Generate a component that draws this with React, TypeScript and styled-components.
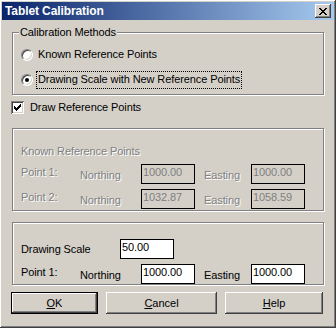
import styled, { createGlobalStyle } from "styled-components";

const GlobalStyle = createGlobalStyle`
  html, body {
    margin: 0;
    padding: 0;
    background: #d4d0c8;
  }
  * {
    box-sizing: border-box;
  }
`;

const raised = `
  background: #d4d0c8;
  box-shadow: inset -1px -1px 0 #404040, inset 1px 1px 0 #ffffff,
    inset -2px -2px 0 #808080, inset 2px 2px 0 #d4d0c8;
`;

const Window = styled.div`
  width: 336px;
  height: 328px;
  padding: 2px;
  background: #d4d0c8;
  box-shadow: inset -1px -1px 0 #404040, inset 1px 1px 0 #ffffff,
    inset -2px -2px 0 #808080;
  font-family: "Liberation Sans", Arial, sans-serif;
  font-size: 11px;
  line-height: 13px;
  letter-spacing: -0.1px;
  color: #000;
  display: flex;
  flex-direction: column;
`;

const TitleBar = styled.div`
  height: 18px;
  display: flex;
  align-items: center;
  justify-content: space-between;
  padding: 0 3px;
  background: linear-gradient(to right, #0a246a, #a6caf0);
`;

const Title = styled.span`
  color: #fff;
  font-weight: bold;
  font-size: 12px;
`;

const CloseButton = styled.div`
  width: 16px;
  height: 14px;
  display: grid;
  place-items: center;
  ${raised}
`;

const Body = styled.div`
  display: flex;
  flex-direction: column;
  padding: 0 10px;
`;

const GroupBox = styled.div<{ $top: number; $pad: string }>`
  position: relative;
  margin-top: ${(p) => p.$top}px;
  padding: ${(p) => p.$pad};
  border: 1px solid #808080;
  box-shadow: inset 1px 1px 0 #ffffff, 1px 1px 0 #ffffff;
  display: flex;
  flex-direction: column;
`;

const Legend = styled.span`
  position: absolute;
  top: -7px;
  left: 6px;
  padding: 0 1px;
  background: #d4d0c8;
`;

const RadioList = styled.div`
  display: flex;
  flex-direction: column;
  gap: 9px;
`;

const RadioRow = styled.div`
  height: 16px;
  display: flex;
  align-items: center;
  gap: 4px;
`;

const Radio = styled.span<{ $checked?: boolean }>`
  position: relative;
  width: 12px;
  height: 12px;
  border-radius: 50%;
  background: #fff;
  border: 1px solid;
  border-color: #808080 #ffffff #ffffff #808080;
  box-shadow: inset 1px 1px 0 #404040, inset -1px -1px 0 #d4d0c8;
  &::after {
    content: "";
    display: ${(p) => (p.$checked ? "block" : "none")};
    position: absolute;
    left: 3px;
    top: 3px;
    width: 4px;
    height: 4px;
    border-radius: 50%;
    background: #000;
  }
`;

const OptionText = styled.span<{ $focused?: boolean }>`
  padding: 1px 1px 2px;
  outline: ${(p) => (p.$focused ? "1px dotted #000" : "none")};
`;

const CheckRow = styled.div`
  margin-top: 6px;
  margin-left: -1px;
  height: 13px;
  display: flex;
  align-items: center;
  gap: 6px;
`;

const CheckBox = styled.span`
  width: 13px;
  height: 13px;
  padding: 2px;
  background: #fff;
  box-shadow: inset 1px 1px 0 #808080, inset -1px -1px 0 #ffffff,
    inset 2px 2px 0 #404040, inset -2px -2px 0 #d4d0c8;
  display: grid;
  place-items: center;
`;

const Label = styled.span<{ $dy?: number; $disabled?: boolean }>`
  margin-top: ${(p) => p.$dy ?? 0}px;
  color: ${(p) => (p.$disabled ? "#808080" : "#000")};
  text-shadow: ${(p) => (p.$disabled ? "1px 1px 0 #ffffff" : "none")};
  white-space: nowrap;
`;

const PointRow = styled.div`
  display: grid;
  grid-template-columns: 59px 61px 54px 56px 55px;
  align-items: start;
  height: 20px;
  & > :nth-child(4) {
    margin-left: 9px;
  }
`;

const ScaleRow = styled.div`
  display: grid;
  grid-template-columns: 99px 54px;
  align-items: start;
  height: 20px;
`;

const Field = styled.div<{ $disabled?: boolean }>`
  width: 54px;
  height: 20px;
  border: 1px solid #000;
  padding: 1px 1px 0;
  background: ${(p) => (p.$disabled ? "#d4d0c8" : "#fff")};
  color: ${(p) => (p.$disabled ? "#808080" : "#000")};
`;

const Rows = styled.div<{ $gap: number; $top?: number }>`
  display: flex;
  flex-direction: column;
  gap: ${(p) => p.$gap}px;
  margin-top: ${(p) => p.$top ?? 0}px;
`;

const ButtonBar = styled.div`
  margin-top: 7px;
  margin-left: -1px;
  display: grid;
  grid-template-columns: 87px 111px 98px;
  column-gap: 8px;
`;

const Button = styled.button<{ $default?: boolean }>`
  height: 22px;
  font: inherit;
  color: #000;
  padding: 0;
  ${raised}
  border: ${(p) => (p.$default ? "1px solid #000" : "none")};
`;

const CheckMark = () => (
  <svg width="7" height="7" viewBox="0 0 7 7" shapeRendering="crispEdges">
    <path
      d="M6 0h1v1H6zM5 1h2v1H5zM0 2h1v1H0zM4 2h3v1H4zM0 3h2v1H0zM3 3h3v1H3zM0 4h5v1H0zM1 5h3v1H1zM2 6h1v1H2z"
      fill="#000"
    />
  </svg>
);

const CloseGlyph = () => (
  <svg width="8" height="7" viewBox="0 0 8 7" shapeRendering="crispEdges">
    <path
      d="M0 0h2v1H0zM6 0h2v1H6zM1 1h2v1H1zM5 1h2v1H5zM2 2h4v1H2zM3 3h2v1H3zM2 4h4v1H2zM1 5h2v1H1zM5 5h2v1H5zM0 6h2v1H0zM6 6h2v1H6z"
      fill="#000"
    />
  </svg>
);

type Point = { name: string; northing: string; easting: string };

const knownPoints: Point[] = [
  { name: "Point 1:", northing: "1000.00", easting: "1000.00" },
  { name: "Point 2:", northing: "1032.87", easting: "1058.59" },
];

const PointLine = ({ p, disabled }: { p: Point; disabled?: boolean }) => (
  <PointRow>
    <Label $dy={2} $disabled={disabled}>
      {p.name}
    </Label>
    <Label $dy={5} $disabled={disabled}>
      Northing
    </Label>
    <Field $disabled={disabled}>{p.northing}</Field>
    <Label $dy={5} $disabled={disabled}>
      Easting
    </Label>
    <Field $disabled={disabled}>{p.easting}</Field>
  </PointRow>
);

export default function App() {
  return (
    <>
      <GlobalStyle />
      <Window>
        <TitleBar>
          <Title>Tablet Calibration</Title>
          <CloseButton>
            <CloseGlyph />
          </CloseButton>
        </TitleBar>
        <Body>
          <GroupBox $top={12} $pad="14px 8px 6px">
            <Legend>Calibration Methods</Legend>
            <RadioList>
              <RadioRow>
                <Radio />
                <OptionText>Known Reference Points</OptionText>
              </RadioRow>
              <RadioRow>
                <Radio $checked />
                <OptionText $focused>Drawing Scale with New Reference Points</OptionText>
              </RadioRow>
            </RadioList>
          </GroupBox>

          <CheckRow>
            <CheckBox>
              <CheckMark />
            </CheckBox>
            <span>Draw Reference Points</span>
          </CheckRow>

          <GroupBox $top={14} $pad="16px 8px 1px">
            <Label $disabled>Known Reference Points</Label>
            <Rows $gap={5} $top={6}>
              {knownPoints.map((p) => (
                <PointLine key={p.name} p={p} disabled />
              ))}
            </Rows>
          </GroupBox>

          <GroupBox $top={11} $pad="16px 8px 0">
            <Rows $gap={5}>
              <ScaleRow>
                <Label $dy={4}>Drawing Scale</Label>
                <Field>50.00</Field>
              </ScaleRow>
              <PointLine p={{ name: "Point 1:", northing: "1000.00", easting: "1000.00" }} />
            </Rows>
          </GroupBox>

          <ButtonBar>
            <Button $default>
              <u>O</u>K
            </Button>
            <Button>
              <u>C</u>ancel
            </Button>
            <Button>
              <u>H</u>elp
            </Button>
          </ButtonBar>
        </Body>
      </Window>
    </>
  );
}
